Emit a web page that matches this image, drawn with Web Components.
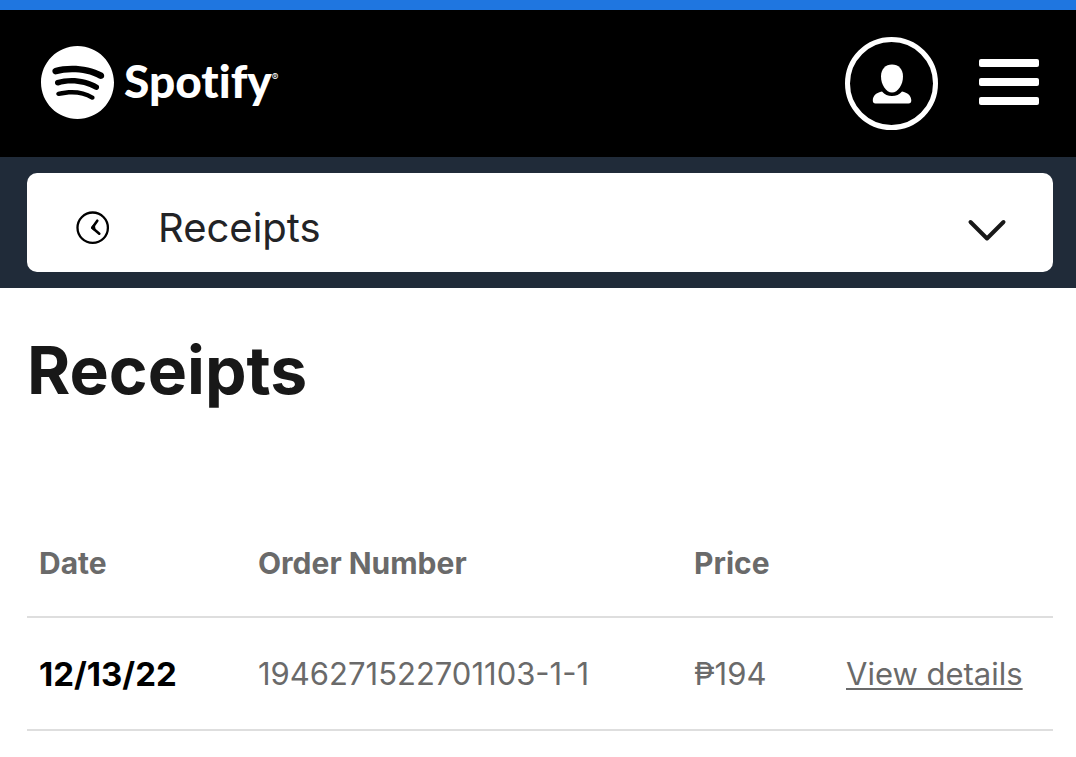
<!DOCTYPE html>
<html lang="en">
<head>
<meta charset="utf-8">
<meta name="viewport" content="width=device-width, initial-scale=1">
<title>Receipts - Spotify</title>
<style>
  body { margin: 0; background: #fff; color: #181818; font-family: Inter, "Liberation Sans", sans-serif; }
</style>
</head>
<body>
<site-header></site-header>
<account-nav></account-nav>
<receipts-page heading="Receipts">
  <receipt-table></receipt-table>
</receipts-page>

<script>
class ShadowElement extends HTMLElement {
  constructor() {
    super();
    this.attachShadow({ mode: 'open' }).innerHTML = this.markup();
  }
}

customElements.define('brand-logo', class extends ShadowElement {
  markup() {
    return `
      <style>
        :host { display: block; padding-bottom: 2px; }
        a { display: flex; align-items: center; gap: 10px; color: #fff; text-decoration: none; }
        .mark { display: block; width: 73px; height: 73px; }
        .name { position: relative; padding-bottom: 4px; font: 900 46px/60px Lato, "Liberation Sans", sans-serif; font-variant-ligatures: none; }
        .reg { position: absolute; left: 100%; top: 20px; font: 400 10px/12px Inter, sans-serif; }
      </style>
      <a href="#" aria-label="Spotify">
        <svg class="mark" viewBox="0 0 24 24" fill="currentColor" aria-hidden="true">
          <path d="M12 0C5.4 0 0 5.4 0 12s5.4 12 12 12 12-5.4 12-12S18.66 0 12 0zm5.521 17.34c-.24.359-.66.48-1.021.24-2.82-1.74-6.36-2.101-10.561-1.141-.418.122-.779-.179-.899-.539-.12-.421.18-.78.54-.9 4.56-1.021 8.52-.6 11.64 1.32.42.18.479.659.301 1.02zm1.44-3.3c-.301.42-.841.6-1.262.3-3.239-1.98-8.159-2.58-11.939-1.38-.479.12-1.02-.12-1.14-.6-.12-.48.12-1.021.6-1.141C9.6 9.9 15 10.561 18.72 12.84c.361.181.54.78.241 1.2zm.12-3.36C15.24 8.4 8.82 8.16 5.16 9.301c-.6.179-1.2-.181-1.38-.721-.18-.601.18-1.2.72-1.381 4.26-1.26 11.28-1.02 15.721 1.621.539.3.719 1.02.419 1.56-.299.421-1.02.599-1.559.3z"/>
        </svg>
        <span class="name">Spotify<span class="reg">®</span></span>
      </a>`;
  }
});

customElements.define('site-header', class extends ShadowElement {
  markup() {
    return `
      <style>
        :host { display: block; background: #000; border-top: 10px solid #1f76e0; }
        header { display: flex; align-items: center; justify-content: space-between; padding: 27px 37px 27px 41px; }
        .actions { display: flex; align-items: center; gap: 41px; }
        button { margin: 0; padding: 0; border: 0; background: none; color: #fff; cursor: pointer; }
        .user { box-sizing: border-box; width: 93px; height: 93px; border: 5px solid #fff; border-radius: 50%; }
        .user svg { display: block; margin: auto; }
        .menu { display: flex; flex-direction: column; gap: 11px; width: 60px; padding-bottom: 4px; }
        .menu span { height: 8px; border-radius: 2px; background: #fff; }
      </style>
      <header>
        <brand-logo></brand-logo>
        <div class="actions">
          <button class="user" type="button" aria-label="Profile">
            <svg width="40" height="40" viewBox="0 0 40 40" fill="currentColor" aria-hidden="true">
              <path d="M20 0.500C26.500 0.500 31 5 31 12.500C31 20.500 26 28.500 20 28.500S9 20.500 9 12.500C9 5 13.500 0.500 20 0.500Z"/>
              <path d="M10 27.500C12.500 30.500 16 32 20 32S27.500 30.500 30 27.500C35.500 28.500 39.300 31.500 39.300 36.500Q39.300 39.500 36.500 39.500H3.500Q0.800 39.500 0.800 36.500C0.800 31.500 4.500 28.500 10 27.500Z"/>
            </svg>
          </button>
          <button class="menu" type="button" aria-label="Menu"><span></span><span></span><span></span></button>
        </div>
      </header>`;
  }
});

customElements.define('account-nav', class extends ShadowElement {
  markup() {
    return `
      <style>
        :host { display: block; background: #202b39; padding: 16px 23px 16px 27px; }
        .box { position: relative; }
        select { appearance: none; display: block; box-sizing: border-box; width: 100%; height: 99px; margin: 0;
          padding: 10px 100px 0 131px; border: 0; border-radius: 10px; background: #fff; color: #222326; font: 400 40px/48px Inter, sans-serif; }
        svg { position: absolute; pointer-events: none; fill: none; stroke-linecap: round; stroke-linejoin: round; }
        .clock { left: 49px; top: 38px; stroke: #000; }
        .chevron { right: 46px; top: 44px; stroke: #181818; }
      </style>
      <div class="box">
        <select aria-label="Account section"><option>Receipts</option></select>
        <svg class="clock" width="34" height="34" viewBox="0 0 34 34" aria-hidden="true">
          <circle cx="16.700" cy="16.700" r="15.200" stroke-width="2.300"/>
          <path d="M21.300 9.700L16.300 16.700L23.300 22.700" stroke-width="2.600"/>
          <path d="M16 16.700L18 14.300L18.500 18.700Z" fill="#000" stroke-width="2"/>
        </svg>
        <svg class="chevron" width="40" height="26" viewBox="0 0 40 26" aria-hidden="true">
          <path d="M3.500 5L20 21.500L36.500 5" stroke-width="4"/>
        </svg>
      </div>`;
  }
});

customElements.define('receipts-page', class extends ShadowElement {
  markup() {
    return `
      <style>
        :host { display: block; padding: 42px 23px 0 27px; }
        h1 { margin: 0 0 112px; font-size: 66px; line-height: 80px; font-weight: 700; }
      </style>
      <main><h1>${this.getAttribute('heading')}</h1><slot></slot></main>`;
  }
});

customElements.define('receipt-table', class extends ShadowElement {
  markup() {
    return `
      <style>
        :host { display: block; color: #6a6a6a; }
        table { width: 100%; table-layout: fixed; border-collapse: separate; border-spacing: 0; text-align: left; }
        .date { width: 219px; }
        .price { width: 152px; }
        .details { width: 219px; }
        th, td { box-sizing: border-box; padding: 0 12px; border-bottom: 2px solid #dedede; white-space: nowrap; }
        thead th { height: 96px; padding-bottom: 12px; font-size: 30px; line-height: 36px; font-weight: 700; }
        tbody th { color: #000; font-size: 33px; line-height: 40px; font-weight: 700; }
        td { height: 113px; font-size: 31px; line-height: 40px; }
        a { color: inherit; text-decoration: underline; text-decoration-thickness: 2px; text-underline-offset: 3px; text-decoration-skip-ink: none; }
      </style>
      <table>
        <colgroup><col class="date"><col><col class="price"><col class="details"></colgroup>
        <thead><tr><th scope="col">Date</th><th scope="col">Order Number</th><th scope="col">Price</th><th></th></tr></thead>
        <tbody><tr><th scope="row">12/13/22</th><td>1946271522701103-1-1</td><td>₱194</td><td><a href="#">View details</a></td></tr></tbody>
      </table>`;
  }
});
</script>
</body>
</html>
